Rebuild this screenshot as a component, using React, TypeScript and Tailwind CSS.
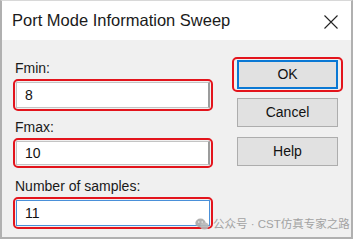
import React from 'react';

const font = { fontFamily: '"Liberation Sans", Arial, sans-serif' };

const Field: React.FC<{ label: string; value: string; focused?: boolean; labelTop: string; inputH: string }> = ({ label, value, focused, labelTop, inputH }) => (
  <div className={`flex flex-col ${labelTop}`}>
    <div className="pl-[2px] text-[14px] leading-[16px] text-[#1a1a1a]">{label}</div>
    <div className={`mt-[3px] ${inputH} rounded-[5px] border-2 border-[#e3141c] p-[1px]`}>
      <div
        className={`flex h-full items-center bg-white pl-[8px] text-[14px] text-[#111] ${
          focused ? 'border border-[#4a90d9]' : 'border border-r-2 border-[#c4c4c4] border-r-[#9c9c9c]'
        }`}
      >
        {value}
      </div>
    </div>
  </div>
);

const Button: React.FC<{ label: string; primary?: boolean }> = ({ label, primary }) => (
  <div
    className={`flex h-[29px] w-[101px] items-center justify-center bg-[#e1e1e1] text-[14px] text-[#111] ${
      primary ? 'border-2 border-[#0a78d4]' : 'border border-[#adadad]'
    }`}
  >
    {label}
  </div>
);

export default function App() {
  return (
    <div className="relative h-[240px] w-[356px] bg-white" style={font}>
      <div className="flex h-[239px] w-[353px] flex-col border-x-2 border-b-2 border-t border-[#b0b0b0] border-t-[#d8d8d8] bg-[#f0f0f0]">
        {/* title bar */}
        <div className="flex h-[39px] shrink-0 items-center justify-between bg-white pl-[10px] pr-[13px]">
          <span className="text-[16.5px] text-[#1a1a1a]">Port Mode Information Sweep</span>
          <svg width="14" height="14" viewBox="0 0 14 14" className="mt-[2px]">
            <path d="M0.5 0.5 L13.5 13.5 M13.5 0.5 L0.5 13.5" stroke="#222" strokeWidth="1.1" fill="none" />
          </svg>
        </div>

        {/* body */}
        <div className="flex flex-1 pl-[11px]">
          <div className="flex w-[200px] flex-col">
            <Field label="Fmin:" value="8" labelTop="mt-[20px]" inputH="h-[32px]" />
            <Field label="Fmax:" value="10" labelTop="mt-[8px]" inputH="h-[30px]" />
            <Field label="Number of samples:" value="11" focused labelTop="mt-[10px]" inputH="h-[32px]" />
          </div>
          <div className="ml-[19px] flex w-[111px] flex-col pt-[17px]">
            <div className="rounded-[5px] border-2 border-[#e3141c] px-[3px] py-[1px]">
              <Button label="OK" primary />
            </div>
            <div className="mt-[6px] flex flex-col gap-[10px] pl-[5px]">
              <Button label="Cancel" />
              <Button label="Help" />
            </div>
          </div>
        </div>
      </div>

      {/* watermark */}
      <div className="absolute left-[195px] top-[218px] flex items-center gap-[4px] text-[#9a9a9a] opacity-90">
        <svg width="14" height="12" viewBox="0 0 14 12">
          <ellipse cx="5.5" cy="5" rx="5.2" ry="4.4" fill="#a8a8a8" />
          <ellipse cx="9.5" cy="8" rx="4.2" ry="3.5" fill="#b8b8b8" />
          <circle cx="3.8" cy="4" r="0.8" fill="#f0f0f0" />
          <circle cx="7.2" cy="4" r="0.8" fill="#f0f0f0" />
        </svg>
        <span
          className="text-[11.5px] leading-[12px]"
          style={{ fontFamily: '"Liberation Sans", "Noto Sans CJK SC", sans-serif' }}
        >
          公众号 · CST仿真专家之路
        </span>
      </div>
    </div>
  );
}
